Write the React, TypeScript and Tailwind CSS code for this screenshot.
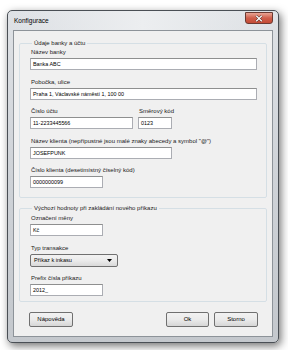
import { ReactNode } from "react";

function Field({ label, value, w, className = "" }: { label: string; value: string; w: string; className?: string }) {
  return (
    <div className={className}>
      <div className="h-[8px] leading-[8px] pl-px">{label}</div>
      <div className={`mt-[2px] h-[12px] ${w} bg-white border border-[#abadb3] border-t-[#8e8f8f] pl-[2px] leading-[10px] text-[5.4px] text-black`}>
        {value}
      </div>
    </div>
  );
}

function Group({ title, children, className = "" }: { title: string; children: ReactNode; className?: string }) {
  return (
    <fieldset className={`mx-[5px] border border-[#d5dfe5] rounded-[2px] pl-[10px] pr-[9px] ${className}`}>
      <legend className="ml-[2px] px-[2px] leading-[8px]">{title}</legend>
      {children}
    </fieldset>
  );
}

function Btn({ children, w }: { children: ReactNode; w: string }) {
  return (
    <div className={`${w} h-[15px] rounded-[2px] border border-[#707070] bg-gradient-to-b from-[#f2f2f2] via-[#ebebeb] to-[#d6d6d6] flex items-center justify-center text-black`}>
      {children}
    </div>
  );
}

export default function App() {
  return (
    <div className="w-[288px] h-[350px] bg-white pt-[10px] pl-[7px] font-['Liberation_Sans',sans-serif] text-[6px] text-[#1a1a1a]">
      <div className="w-[272px] h-[333px] rounded-[5px] border border-[#4a4f55] bg-gradient-to-b from-[#dfe2e6] via-[#cfd3d8] to-[#c4c8cd] shadow-[2px_3px_8px_rgba(0,0,0,0.55)] px-[5px] pb-[5px] flex flex-col">
        {/* Title bar */}
        <div className="h-[19px] flex items-start justify-between bg-gradient-to-r from-transparent via-[#eceef0] to-transparent">
          <div className="pt-[6px] pl-px text-[6.5px] text-black leading-[8px]">Konfigurace</div>
          <div className="w-[28px] h-[12px] mt-[1px] rounded-b-[3px] border border-[#6b3a32] bg-gradient-to-b from-[#e8a595] via-[#cf5f4c] to-[#c44a35] flex items-center justify-center">
            <svg width="8" height="7" viewBox="0 0 8 7">
              <path d="M1.2 0.8 L6.8 6.2 M6.8 0.8 L1.2 6.2" stroke="#3b1d18" strokeWidth="2.2" />
              <path d="M1.2 0.8 L6.8 6.2 M6.8 0.8 L1.2 6.2" stroke="#ffffff" strokeWidth="1.3" />
            </svg>
          </div>
        </div>

        {/* Client area */}
        <div className="flex-1 bg-[#f0f0f0] border border-[#8d9399] flex flex-col">
          <Group title="Údaje banky a účtu" className="mt-[8px] pb-[6px] h-[159px]">
            <Field label="Název banky" value="Banka ABC" w="w-full" className="mt-[1px]" />
            <Field label="Pobočka, ulice" value="Praha 1, Václavské náměstí 1, 100 00" w="w-full" className="mt-[8px]" />
            <div className="mt-[7px] flex gap-[5px]">
              <Field label="Číslo účtu" value="11-2233445566" w="w-[103px]" />
              <Field label="Směrový kód" value="0123" w="w-[34px]" />
            </div>
            <Field label={'Název klienta (nepřípustné jsou malé znaky abecedy a symbol "@")'} value="JOSEFPUNK" w="w-[142px]" className="mt-[8px]" />
            <Field label="Číslo klienta (desetimístný číselný kód)" value="0000000099" w="w-[73px]" className="mt-[7px]" />
          </Group>

          <Group title="Výchozí hodnoty při zakládání nového příkazu" className="mt-[6px] h-[98px]">
            <Field label="Označení měny" value="Kč" w="w-[73px]" className="mt-[2px]" />
            <div className="mt-[8px]">
              <div className="h-[8px] leading-[8px] pl-px">Typ transakce</div>
              <div className="mt-[2px] h-[13px] w-[88px] rounded-[2px] border border-[#707070] bg-gradient-to-b from-[#f2f2f2] via-[#ebebeb] to-[#d9d9d9] flex items-center justify-between pl-[3px] pr-[5px] text-[5.6px] text-black">
                <span>Příkaz k inkasu</span>
                <svg width="5" height="3" viewBox="0 0 5 3">
                  <path d="M0 0 H5 L2.5 3 Z" fill="#000" />
                </svg>
              </div>
            </div>
            <Field label="Prefix čísla příkazu" value="2012_" w="w-[73px]" className="mt-[7px]" />
          </Group>

          <div className="mt-[10px] pl-[15px] pr-[14px] flex items-center">
            <Btn w="w-[44px]">Nápověda</Btn>
            <div className="flex-1" />
            <Btn w="w-[43px]">Ok</Btn>
            <div className="w-[5px]" />
            <Btn w="w-[44px]">Storno</Btn>
          </div>
        </div>
      </div>
    </div>
  );
}
